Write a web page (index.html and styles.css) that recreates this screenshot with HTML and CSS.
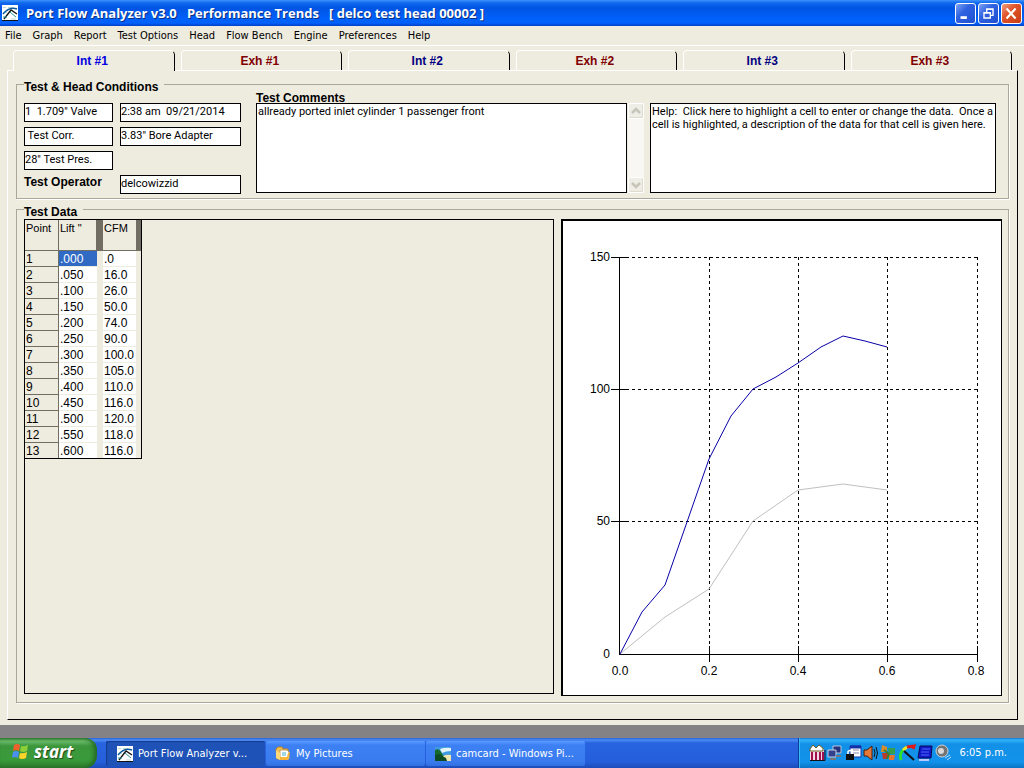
FILE: index.html
```html
<!DOCTYPE html>
<html lang="en">
<head>
<meta charset="utf-8">
<title>Port Flow Analyzer v3.0</title>
<link rel="stylesheet" href="styles.css">
</head>
<body>
<svg width="0" height="0" class="defs" aria-hidden="true">
  <symbol id="app-icon" viewBox="0 0 16 16">
    <rect width="16" height="16" fill="#fff"/>
    <path d="M1 2.500h3M6 2.500h5M2 7.500h3M9 14h5" stroke="#bcd8d4"/>
    <path d="M1 9C5 4 10 2 15 4" fill="none" stroke="#0a5a9c" stroke-width="1.500"/>
    <path d="M2 14L9 5L15 9" fill="none" stroke="#111" stroke-width="1.300"/>
    <path d="M1 12h4M8 7l6 5" stroke="#2a9a98" fill="none"/>
    <path d="M0 15.500h16" stroke="#111"/>
  </symbol>
</svg>

<main class="window">
  <header class="titlebar">
    <svg class="title-icon" viewBox="0 0 16 16" aria-hidden="true"><use href="#app-icon"/></svg>
    <h1 class="title">Port Flow Analyzer v3.0   Performance Trends   [ delco test head 00002 ]</h1>
    <div class="window-buttons">
      <button class="winbtn" aria-label="Minimize"><svg viewBox="0 0 21 21"><path d="M5 15h7" stroke="#fff" stroke-width="3"/></svg></button>
      <button class="winbtn" aria-label="Restore"><svg viewBox="0 0 21 21"><path d="M8.500 9V5.500h7v7H13M8 6h8" fill="none" stroke="#fff" stroke-width="1.500"/><path d="M5.500 9.500h7v6h-7zM5 10h8" fill="none" stroke="#fff" stroke-width="1.500"/></svg></button>
      <button class="winbtn winbtn-close" aria-label="Close"><svg viewBox="0 0 21 21"><path d="M5 5l10 11M15 5l-10 11" stroke="#fff" stroke-width="2.400"/></svg></button>
    </div>
  </header>

  <nav class="menubar">
    <button>File</button><button>Graph</button><button>Report</button><button>Test Options</button><button>Head</button><button>Flow Bench</button><button>Engine</button><button>Preferences</button><button>Help</button>
  </nav>

  <div class="tabs" role="tablist">
    <button class="tab tab-active" role="tab" aria-selected="true">Int #1</button>
    <button class="tab tab-exh" role="tab">Exh #1</button>
    <button class="tab" role="tab">Int #2</button>
    <button class="tab tab-exh" role="tab">Exh #2</button>
    <button class="tab" role="tab">Int #3</button>
    <button class="tab tab-exh" role="tab">Exh #3</button>
  </div>

  <section class="panel">
    <fieldset class="group">
      <legend>Test &amp; Head Conditions</legend>
      <div class="conditions">
        <div class="fields">
          <input class="field" aria-label="Valve" value="1  1.709&quot; Valve">
          <input class="field" aria-label="Test time" value="2:38 am  09/21/2014">
          <input class="field" aria-label="Test correction" value=" Test Corr.">
          <input class="field" aria-label="Bore adapter" value="3.83&quot; Bore Adapter">
          <input class="field field-first" aria-label="Test pressure" value="28&quot; Test Pres.">
          <label class="operator-label" for="operator">Test Operator</label>
          <input class="field" id="operator" value="delcowizzid">
        </div>
        <div class="comments">
          <label for="comments">Test Comments</label>
          <div class="comments-row">
            <textarea class="box" id="comments">allready ported inlet cylinder 1 passenger front</textarea>
            <div class="scrollbar">
              <button aria-label="Scroll up"><svg viewBox="0 0 14 14"><path d="M3 9l4-4 4 4" fill="none" stroke="#c6c5ba" stroke-width="2.500"/></svg></button>
              <button aria-label="Scroll down"><svg viewBox="0 0 14 14"><path d="M3 5l4 4 4-4" fill="none" stroke="#c6c5ba" stroke-width="2.500"/></svg></button>
            </div>
          </div>
        </div>
        <div class="box help">Help:  Click here to highlight a cell to enter or change the data.  Once a cell is highlighted, a description of the data for that cell is given here.</div>
      </div>
    </fieldset>

    <fieldset class="group group-data">
      <legend>Test Data</legend>
      <div class="data">
        <div class="grid-box">
          <table class="grid">
            <thead><tr><th>Point</th><th>Lift "</th><th class="bar"></th><th>CFM</th><th class="bar bar-end"></th></tr></thead>
            <tbody>
              <tr><th>1</th><td class="selected">.000</td><td class="sep"></td><td>.0</td><td class="sep"></td></tr>
              <tr><th>2</th><td>.050</td><td class="sep"></td><td>16.0</td><td class="sep"></td></tr>
              <tr><th>3</th><td>.100</td><td class="sep"></td><td>26.0</td><td class="sep"></td></tr>
              <tr><th>4</th><td>.150</td><td class="sep"></td><td>50.0</td><td class="sep"></td></tr>
              <tr><th>5</th><td>.200</td><td class="sep"></td><td>74.0</td><td class="sep"></td></tr>
              <tr><th>6</th><td>.250</td><td class="sep"></td><td>90.0</td><td class="sep"></td></tr>
              <tr><th>7</th><td>.300</td><td class="sep"></td><td>100.0</td><td class="sep"></td></tr>
              <tr><th>8</th><td>.350</td><td class="sep"></td><td>105.0</td><td class="sep"></td></tr>
              <tr><th>9</th><td>.400</td><td class="sep"></td><td>110.0</td><td class="sep"></td></tr>
              <tr><th>10</th><td>.450</td><td class="sep"></td><td>116.0</td><td class="sep"></td></tr>
              <tr><th>11</th><td>.500</td><td class="sep"></td><td>120.0</td><td class="sep"></td></tr>
              <tr><th>12</th><td>.550</td><td class="sep"></td><td>118.0</td><td class="sep"></td></tr>
              <tr><th>13</th><td>.600</td><td class="sep"></td><td>116.0</td><td class="sep"></td></tr>
            </tbody>
          </table>
        </div>
        <div class="chart">
          <svg viewBox="0 0 438 474" role="img" aria-label="CFM against lift">
            <g class="gridlines">
              <path d="M57 36.500H414M57 168.500H414M57 300.500H414"/>
              <path d="M146.500 36V433M235.500 36V433M324.500 36V433M414.500 36V433"/>
            </g>
            <g class="axes">
              <path d="M56.500 36V433.500H414"/>
              <path d="M48 36.500H65M48 168.500H65M48 300.500H65"/>
              <path d="M146.500 425V441M235.500 425V441M324.500 425V441M414.500 425V441"/>
            </g>
            <polyline class="curve-ref" points="57,433 102,396 146,368 190,300 235,269 280,263 324,269"/>
            <polyline class="curve" points="57,433 79,391 102,364 124,301 146,238 168,195 190,168 213,156 235,142 258,126 280,115 302,120 324,126"/>
            <g class="ticks ticks-y">
              <text x="47" y="40">150</text><text x="47" y="172">100</text><text x="47" y="304">50</text><text x="47" y="437">0</text>
            </g>
            <g class="ticks ticks-x">
              <text x="57" y="454">0.0</text><text x="146" y="454">0.2</text><text x="235" y="454">0.4</text><text x="324" y="454">0.6</text><text x="413" y="454">0.8</text>
            </g>
          </svg>
        </div>
      </div>
    </fieldset>
  </section>
</main>

<footer class="taskbar">
  <button class="start">
    <svg viewBox="0 0 18 18" aria-hidden="true">
      <path d="M3 2q3-2 6 0l-1 6q-3-2-6 0z" fill="#f0602c"/>
      <path d="M10 3q3 1 7-1l-1 6q-4 2-7 0z" fill="#8ccf38"/>
      <path d="M2 9q3-2 6 0l-1 6q-3-2-6 0z" fill="#4a90f0"/>
      <path d="M9 10q3 1 7-1l-1 6q-4 2-7 0z" fill="#ffd42a"/>
    </svg>
    start
  </button>
  <button class="task task-active"><svg viewBox="0 0 16 16" aria-hidden="true"><use href="#app-icon"/></svg>Port Flow Analyzer v...</button>
  <button class="task"><svg viewBox="0 0 16 16" aria-hidden="true">
    <path d="M1 3l2-2h4l1 2h5v10H2z" fill="#f3c04c" stroke="#b9812a"/>
    <path d="M5 4h7l2 2v7H5z" fill="#fff" stroke="#c7a25a"/>
    <path d="M7 6h4v4H7z" fill="#9fd6e8"/>
    <path d="M1 4l4 3v7l-4-2z" fill="#ffd978"/>
    <path d="M5 14h8l2-8-2 1-1 4H5z" fill="#f8b53a"/>
  </svg>My Pictures</button>
  <button class="task"><svg viewBox="0 0 16 16" aria-hidden="true">
    <rect y="1" width="16" height="14" fill="#3f9be0"/>
    <path d="M5 3q5-2 11-1v3q-5 0-9 2z" fill="#e4f5f8"/>
    <path d="M0 4q4-2 6 2t4 5H0z" fill="#166b2a"/>
    <path d="M8 10q4-2 8-1v6H6z" fill="#f0e6ae"/>
    <path d="M0 9l4-1 7 4 1 3H0z" fill="#0d4b22"/>
  </svg>camcard - Windows Pi...</button>
  <div class="tray">
    <svg class="tray-icons" viewBox="0 0 142 18" aria-hidden="true">
      <path d="M1 5h14v11H1z" fill="#f3d8e4"/><path d="M1 5l3-4 3 3 3-3 4 3v3H1z" fill="#fff" stroke="#6b5b20"/><path d="M3 8v8M7 8v8M11 8v8M14 8v8" stroke="#a0104c" stroke-width="2"/><path d="M1 16.500h15V6" fill="none" stroke="#111"/>
      <path d="M24 2h8v7h-8z" fill="#26327c" stroke="#b8c4dc"/><path d="M19 6h8v7h-8z" fill="#34428c" stroke="#c5cfe4"/><path d="M21 15h6M27 12h5" stroke="#777" stroke-width="2"/>
      <path d="M41 2h11v11H41z" fill="#fff" stroke="#1531a8"/><path d="M41 3h11" stroke="#1531a8" stroke-width="3"/><path d="M44 6h6M44 9h6" stroke="#88a"/><path d="M37 10h8v6h-8z" fill="#111"/><path d="M39 10V7.500q2-2 4 0V10" fill="none" stroke="#fff" stroke-width="1.500"/>
      <path d="M55 6h3l5-4v14l-5-4h-3z" fill="#e87838" stroke="#4a1c08"/><path d="M65 5q2 4 0 8M67 3q3 6 0 12" fill="none" stroke="#111"/>
      <path d="M73 1l5 2v5h-6z" fill="#d78a28"/><path d="M79 4h7v6h-6z" fill="#35a04c"/><path d="M73 9h6v6h-5z" fill="#b83c2c"/><path d="M80 11h6l-1 5h-5z" fill="#e8752c"/><path d="M75 6l5 4-2 5" fill="none" stroke="#39802e" stroke-width="2"/>
      <path d="M92 16q-2-6 2-10" fill="none" stroke="#2ce02c" stroke-width="3"/><path d="M94 6l4-3" stroke="#f0e820" stroke-width="3"/><path d="M98 3l7-1-1 3" fill="none" stroke="#e01818" stroke-width="3"/><path d="M95 7l10 9" stroke="#111" stroke-width="2"/>
      <path d="M111 2h12l-1 12h-13z" fill="#1018c8" stroke="#0a0a55"/><path d="M113 5h8M112 8h8M112 11h8" stroke="#4c68ff"/><path d="M110 16h10" stroke="#bcc9ff" stroke-width="2"/>
      <circle cx="133" cy="7" r="6" fill="#747474" stroke="#c9d0d4"/><circle cx="132" cy="7" r="3" fill="#d8d8d8"/><path d="M136 14l5-3M138 16l4-3" stroke="#b8dcf8"/>
    </svg>
    <time>6:05 p.m.</time>
  </div>
</footer>
</body>
</html>
```
FILE: styles.css
```css
* { box-sizing: border-box; }

body {
  margin: 0;
  min-height: 100vh;
  display: flex;
  flex-direction: column;
  gap: 13px;
  background: #848284;
  color: #000;
  font: 11px/13px Roboto, Arial, sans-serif;
}

button, input, textarea { font: inherit; color: inherit; margin: 0; }
button { padding: 0; border: 0; background: none; }
.defs { position: absolute; }

.window {
  flex: 1;
  display: flex;
  flex-direction: column;
  background: #eeebdf;
}

/* Title bar */
.titlebar {
  display: flex;
  align-items: center;
  height: 26px;
  padding: 0 2px;
  background: linear-gradient(#3c92fc 0, #1068ee 3px, #0054e3 8px, #0060fa 18px, #0162fc 23px, #0040c8 26px);
}
.title-icon { width: 16px; height: 16px; }
.title {
  flex: 1;
  margin: 0 0 0 8px;
  color: #fff;
  font: bold 13px/16px "Open Sans", sans-serif;
  text-shadow: 1px 1px 0 #0a2f80;
  white-space: pre;
}
.window-buttons { display: flex; gap: 2px; }
.winbtn {
  width: 21px;
  height: 21px;
  border: 1px solid #fff;
  border-radius: 3px;
  background: linear-gradient(135deg, #7ea4f4, #2f62e0 40%, #2050d0);
}
.winbtn-close { background: linear-gradient(135deg, #f0a080, #e0542c 40%, #c83c10); }
.winbtn svg { display: block; width: 19px; height: 19px; }

/* Menu */
.menubar {
  display: flex;
  gap: 11px;
  height: 20px;
  padding: 0 5px;
  border-bottom: 1px solid #fff;
  font: 11px/19px "DejaVu Sans Condensed", Tahoma, sans-serif;
}

/* Tabs */
.tabs {
  display: grid;
  grid-template-columns: repeat(6, 1fr);
  gap: 6px;
  padding: 4px 12px 0 13px;
}
.tab {
  height: 20px;
  padding-right: 3px;
  border: 1px solid #fff;
  border-right-color: #000;
  border-bottom: 0;
  border-radius: 4px 5px 0 0;
  color: #000080;
  font: bold 12px/18px "Liberation Sans", Arial, sans-serif;
}
.tab-active {
  position: relative;
  height: 21px;
  margin-bottom: -1px;
  background: #eeebdf;
  color: #0000e0;
}
.tab-exh { color: #800000; }

.panel {
  flex: 1;
  display: flex;
  flex-direction: column;
  gap: 1px;
  margin: 0 6px 5px 7px;
  padding: 4px 8px 16px;
  border: 1px solid #000;
  border-top-color: #fff;
  border-left-color: #fff;
}

/* Group boxes */
.group {
  min-width: 0;
  margin: 0;
  padding: 0 6px 4px 7px;
  border: 1px solid #aca899;
  box-shadow: 1px 1px 0 #fff;
}
.group legend {
  padding: 6px 6px 0 0;
  font: bold 12px/13px "Liberation Sans", Arial, sans-serif;
}

.conditions { display: flex; padding-right: 6px; }
.fields {
  display: grid;
  grid-template-columns: 89px 121px;
  gap: 5px 7px;
  margin: 9px 15px 0 0;
}
.field {
  width: 100%;
  height: 19px;
  padding: 0 0 3px;
  border: 1px solid #000;
  background: #fff;
  white-space: pre;
}
.field-first { grid-column: 1; }
.operator-label { grid-column: 1; font: bold 12px/15px "Liberation Sans", Arial, sans-serif; }
.comments {
  flex: 388 1 0;
  display: flex;
  flex-direction: column;
}
.comments label { padding-bottom: 1px; font: bold 12px/8px "Liberation Sans", Arial, sans-serif; }
.comments-row { flex: 1; display: flex; gap: 1px; margin-bottom: 1px; }
.box {
  border: 1px solid #000;
  background: #fff;
  padding: 1px;
}
textarea.box { flex: 1; min-width: 0; resize: none; overflow: hidden; }
.scrollbar {
  display: flex;
  flex-direction: column;
  justify-content: space-between;
  width: 16px;
  background: #f8f7f3;
}
.scrollbar button {
  height: 16px;
  border: 1px solid #fff;
  border-radius: 2px;
  background: #efeee6;
  box-shadow: inset -1px -1px 0 #dddbd0;
}
.scrollbar svg { display: block; width: 14px; height: 14px; }
.help { flex: 342 1 0; margin: 9px 0 1px 6px; white-space: pre-wrap; }

/* Test data */
.group-data { padding-bottom: 6px; }
.data { display: flex; gap: 7px; }
.grid-box { flex: 528 1 0; margin-bottom: 2px; border: 1px solid #000; }
.grid {
  width: 117px;
  table-layout: fixed;
  border-collapse: separate;
  border-spacing: 0;
  border-right: 1px solid #000;
  border-bottom: 1px solid #000;
  font: 12px/14px "Liberation Sans", Arial, sans-serif;
}
.grid th, .grid td {
  height: 16px;
  padding: 1px 0 0 1px;
  text-align: left;
  font-weight: normal;
}
.grid thead th {
  width: 34px;
  height: 31px;
  vertical-align: top;
  font-size: 11px;
  border-bottom: 1px solid #716d62;
  border-right: 1px solid #716d62;
}
.grid thead th:nth-child(2) { width: 38px; }
.grid thead .bar { width: 6px; padding: 0; background: #716d62; }
.grid thead .bar-end { width: 5px; }
.grid thead th:nth-child(4) { width: 33px; border-right: 0; }
.grid tbody th { border-right: 1px solid #716d62; border-bottom: 1px solid #716d62; }
.grid td { background: #fff; border-bottom: 1px solid #eeebdf; }
.grid .sep { padding: 0; background: #eeebdf; }
.grid .selected { background: #316ac5; color: #fff; }
.grid tbody tr:last-child > * { height: 15px; border-bottom: 0; }

.chart {
  flex: 438 1 0;
  border: 1px solid #000;
  border-top-width: 2px;
  border-left-width: 2px;
  background: #fff;
}
.chart svg { display: block; width: 100%; }
.gridlines { fill: none; stroke: #000; stroke-dasharray: 3 3; shape-rendering: crispEdges; }
.axes { fill: none; stroke: #000; shape-rendering: crispEdges; }
.curve { fill: none; stroke: #0800a8; }
.curve-ref { fill: none; stroke: #c0c0c0; }
.ticks { font: 12px "Liberation Sans", Arial, sans-serif; }
.ticks-y { text-anchor: end; }
.ticks-x { text-anchor: middle; }

/* Taskbar */
.taskbar {
  display: flex;
  height: 30px;
  background: linear-gradient(#2a62d8 0, #4a8cf4 2px, #2863e0 5px, #245edb 24px, #1c4cb8 30px);
  color: #fff;
  font: 11px/16px "DejaVu Sans Condensed", Tahoma, sans-serif;
}
.start {
  display: flex;
  align-items: center;
  gap: 5px;
  width: 97px;
  padding: 0 0 2px 11px;
  margin-right: 9px;
  border-radius: 0 12px 12px 0;
  background: linear-gradient(#388838 0, #6cbc6c 3px, #3c963c 8px, #3a9a3a 22px, #2c7a2c 30px);
  box-shadow: inset -3px 0 4px #256a25;
  font: italic bold 17px/22px "Open Sans", sans-serif;
  text-shadow: 1px 1px 1px #1c4a1c;
}
.start svg { width: 18px; height: 18px; }
.task {
  display: flex;
  align-items: center;
  gap: 5px;
  width: 159px;
  margin: 3px 1px 2px 0;
  padding-left: 9px;
  border-radius: 2px;
  background: linear-gradient(#5c9cff 0, #3c80f4 4px, #3a7cf0 20px, #3270e0 25px);
}
.task-active {
  padding-left: 11px;
  background: #1e52b7;
  box-shadow: inset 1px 1px 1px #143c8c;
}
.task svg { width: 16px; height: 16px; }
.tray {
  display: flex;
  align-items: center;
  justify-content: space-between;
  width: 226px;
  margin-left: auto;
  padding: 0 17px 0 10px;
  border-left: 1px solid #0c3c9c;
  background: linear-gradient(#1478d8 0, #30b4f8 2px, #1290e8 6px, #1292ea 24px, #0c74c4 30px);
  box-shadow: inset 1px 0 0 #38bcf8;
}
.tray-icons { width: 142px; height: 18px; }
```
